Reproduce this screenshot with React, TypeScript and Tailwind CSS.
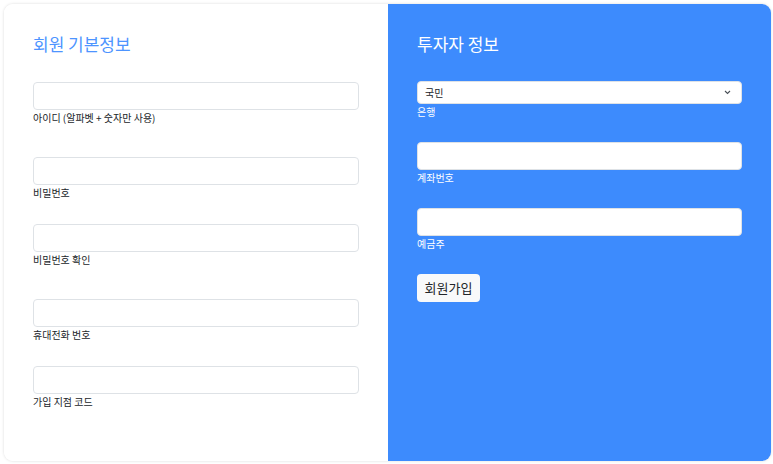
import React from "react";

const font = { fontFamily: '"Noto Sans CJK KR", "Noto Sans", sans-serif' };

function Field({ label, mt, light }: { label: string; mt: string; light?: boolean }) {
  return (
    <div className={mt}>
      <input
        type="text"
        className="block w-full h-[28px] rounded-[4px] border border-[#dee2e6] bg-white outline-none"
      />
      <div className={light ? "text-[10px] leading-[15px] text-white" : "text-[10px] leading-[15px] text-[#212529]"}>
        {label}
      </div>
    </div>
  );
}

export default function App() {
  return (
    <div className="bg-white w-[773px] h-[464px] pt-[4px] pl-[4px]" style={font}>
      <div className="flex w-[767px] h-[457px] rounded-[9px] overflow-hidden shadow-[0_0_3px_rgba(0,0,0,0.15)]">
        <div className="w-[384px] bg-white px-[29px] pt-[26px]">
          <h2 className="text-[17px] leading-[27px] text-[#4d94ff] font-normal">회원 기본정보</h2>
          <Field label="아이디 (알파벳 + 숫자만 사용)" mt="mt-[25px]" />
          <Field label="비밀번호" mt="mt-[32px]" />
          <Field label="비밀번호 확인" mt="mt-[24px]" />
          <Field label="휴대전화 번호" mt="mt-[32px]" />
          <Field label="가입 지점 코드" mt="mt-[24px]" />
        </div>
        <div className="flex-1 bg-[#3d8bfd] px-[29px] pt-[26px]">
          <h2 className="text-[17px] leading-[27px] text-white font-normal">투자자 정보</h2>
          <div className="mt-[24px]">
            <div className="relative w-full h-[23px] rounded-[4px] bg-white border border-[#dee2e6] flex items-center pl-[7px]">
              <span className="text-[10px] text-[#212529]">국민</span>
              <svg className="absolute right-[10px] top-[8px]" width="7" height="5" viewBox="0 0 7 5">
                <path d="M1 1 L3.5 3.5 L6 1" fill="none" stroke="#495057" strokeWidth="1.1" />
              </svg>
            </div>
            <div className="text-[10px] leading-[15px] text-white">은행</div>
          </div>
          <Field label="계좌번호" mt="mt-[23px]" light />
          <Field label="예금주" mt="mt-[23px]" light />
          <button className="mt-[23px] h-[28px] w-[63px] rounded-[4px] bg-[#f8f9fa] text-[13px] text-[#212529]">
            회원가입
          </button>
        </div>
      </div>
    </div>
  );
}
